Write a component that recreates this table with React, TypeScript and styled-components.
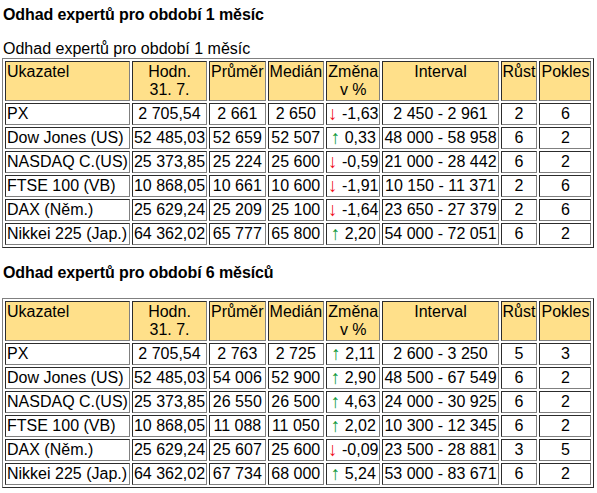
import React from "react";
import styled, { createGlobalStyle } from "styled-components";

const Global = createGlobalStyle`
  html, body { margin: 0; padding: 0; background: #fff; }
  body { font-family: "Liberation Sans", Arial, sans-serif; font-size: 16px; color: #000; }
`;

const Page = styled.div`
  padding: 6px 2px 0 2px;
`;

const Heading = styled.h3`
  margin: 0 0 16px 1px;
  font-size: 16px;
  font-weight: bold;
  line-height: normal;
  letter-spacing: -0.1px;
`;

const Table = styled.table`
  border: 1px outset gray;
  border-spacing: 2px;
  margin-bottom: 16px;
`;

const Caption = styled.caption`
  text-align: left;
  padding-left: 1px;
`;

const HeadCell = styled.th<{ $left?: boolean }>`
  background: #ffe08a;
  border: 1px inset gray;
  padding: 1px;
  font-weight: normal;
  vertical-align: top;
  text-align: ${(p) => (p.$left ? "left" : "center")};
`;

const Cell = styled.td<{ $left?: boolean }>`
  border: 1px inset gray;
  padding: 1px;
  white-space: nowrap;
  text-align: ${(p) => (p.$left ? "left" : "center")};
`;

const Arrow = styled.span<{ $up: boolean }>`
  color: ${(p) => (p.$up ? "#109a3c" : "#f0101c")};
  font-size: 19px;
  line-height: 0;
  vertical-align: -1px;
`;

type Row = [string, string, string, string, string, string, string, string];

const month1: Row[] = [
  ["PX", "2 705,54", "2 661", "2 650", "-1,63", "2 450 - 2 961", "2", "6"],
  ["Dow Jones (US)", "52 485,03", "52 659", "52 507", "0,33", "48 000 - 58 958", "6", "2"],
  ["NASDAQ C.(US)", "25 373,85", "25 224", "25 600", "-0,59", "21 000 - 28 442", "6", "2"],
  ["FTSE 100 (VB)", "10 868,05", "10 661", "10 600", "-1,91", "10 150 - 11 371", "2", "6"],
  ["DAX (Něm.)", "25 629,24", "25 209", "25 100", "-1,64", "23 650 - 27 379", "2", "6"],
  ["Nikkei 225 (Jap.)", "64 362,02", "65 777", "65 800", "2,20", "54 000 - 72 051", "6", "2"],
];

const month6: Row[] = [
  ["PX", "2 705,54", "2 763", "2 725", "2,11", "2 600 - 3 250", "5", "3"],
  ["Dow Jones (US)", "52 485,03", "54 006", "52 900", "2,90", "48 500 - 67 549", "6", "2"],
  ["NASDAQ C.(US)", "25 373,85", "26 550", "26 500", "4,63", "24 000 - 30 925", "6", "2"],
  ["FTSE 100 (VB)", "10 868,05", "11 088", "11 050", "2,02", "10 300 - 12 345", "6", "2"],
  ["DAX (Něm.)", "25 629,24", "25 607", "25 600", "-0,09", "23 500 - 28 881", "3", "5"],
  ["Nikkei 225 (Jap.)", "64 362,02", "67 734", "68 000", "5,24", "53 000 - 83 671", "6", "2"],
];

function ExpertTable({ rows, caption }: { rows: Row[]; caption?: string }) {
  return (
    <Table>
      {caption && <Caption>{caption}</Caption>}
      <thead>
        <tr>
          <HeadCell $left>Ukazatel</HeadCell>
          <HeadCell>
            Hodn.
            <br />
            31. 7.
          </HeadCell>
          <HeadCell>Průměr</HeadCell>
          <HeadCell>Medián</HeadCell>
          <HeadCell>
            Změna
            <br />v %
          </HeadCell>
          <HeadCell>Interval</HeadCell>
          <HeadCell>Růst</HeadCell>
          <HeadCell>Pokles</HeadCell>
        </tr>
      </thead>
      <tbody>
        {rows.map((r) => {
          const up = !r[4].startsWith("-");
          return (
            <tr key={r[0]}>
              <Cell $left>{r[0]}</Cell>
              <Cell>{r[1]}</Cell>
              <Cell>{r[2]}</Cell>
              <Cell>{r[3]}</Cell>
              <Cell>
                <Arrow $up={up}>{up ? "↑" : "↓"}</Arrow> {r[4]}
              </Cell>
              <Cell>{r[5]}</Cell>
              <Cell>{r[6]}</Cell>
              <Cell>{r[7]}</Cell>
            </tr>
          );
        })}
      </tbody>
    </Table>
  );
}

export default function App() {
  return (
    <Page>
      <Global />
      <Heading>Odhad expertů pro období 1 měsíc</Heading>
      <ExpertTable rows={month1} caption="Odhad expertů pro období 1 měsíc" />
      <Heading>Odhad expertů pro období 6 měsíců</Heading>
      <ExpertTable rows={month6} />
    </Page>
  );
}
